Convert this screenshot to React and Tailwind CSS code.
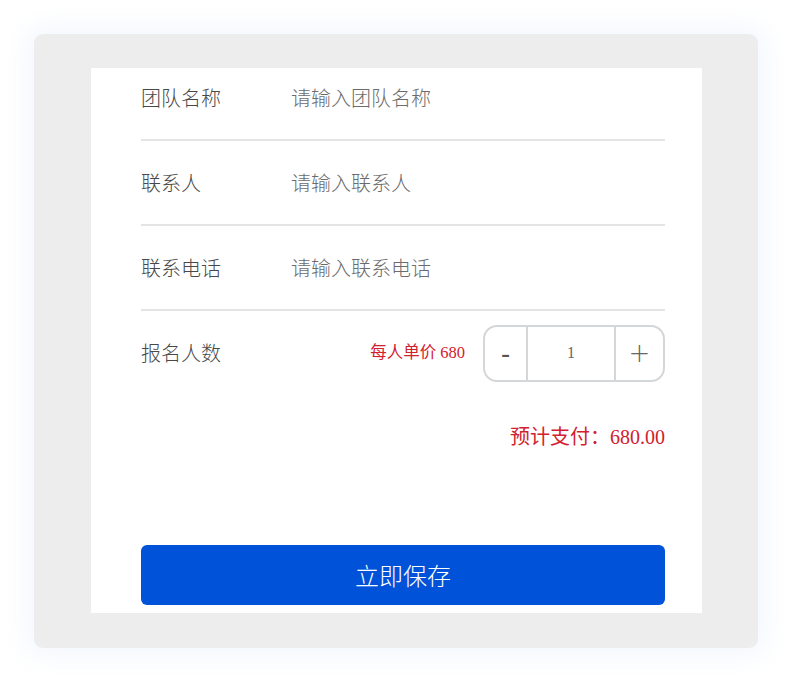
import React from "react";

const cjk = { fontFamily: '"Noto Sans CJK SC", "Noto Sans", sans-serif' };
const mix = { fontFamily: '"Liberation Serif", "Noto Sans CJK SC", serif' };

function Row({ label, placeholder, className }) {
  return (
    <div className={`flex items-center border-b-2 border-[#e4e4e4] ${className}`}>
      <div className="w-[150px] shrink-0 text-[20px] leading-[28px] text-[#484848] font-light" style={cjk}>
        {label}
      </div>
      <input
        className="flex-1 bg-transparent text-[20px] leading-[28px] text-[#333] font-light outline-none placeholder:text-[#6c6c6c]"
        style={cjk}
        placeholder={placeholder}
      />
    </div>
  );
}

export default function App() {
  return (
    <div className="w-[792px] h-[682px] bg-white p-[34px]">
      <div className="w-full h-full rounded-[9px] bg-[#ededed] pt-[34px] pb-[35px] pl-[57px] pr-[56px] shadow-[0_0_24px_8px_rgba(225,236,250,0.4)]">
        <div className="h-full bg-white pl-[50px] pr-[37px] flex flex-col">
          <Row label="团队名称" placeholder="请输入团队名称" className="h-[73px] !items-start pt-[16px]" />
          <Row label="联系人" placeholder="请输入联系人" className="h-[85px]" />
          <Row label="联系电话" placeholder="请输入联系电话" className="h-[85px]" />
          <div className="flex items-center h-[84px]">
            <div className="w-[150px] shrink-0 text-[20px] leading-[28px] text-[#484848] font-light" style={cjk}>
              报名人数
            </div>
            <div className="flex-1 flex items-center justify-end">
              <span className="text-[16.5px] text-[#d3202e] mr-[18px]" style={mix}>
                每人单价 680
              </span>
              <div className="flex h-[57px] w-[182px] rounded-[14px] border-2 border-[#d4d7d9] overflow-hidden">
                <button className="w-[43px] flex items-center justify-center text-[26px] font-bold text-[#555] border-r-2 border-[#d4d7d9]" style={mix}>
                  -
                </button>
                <div className="w-[86px] flex items-center justify-center text-[16px] text-[#666]" style={mix}>
                  1
                </div>
                <button className="flex-1 flex items-center justify-center text-[26px] text-[#666] border-l-2 border-[#d4d7d9] font-light" style={{ fontFamily: '"DejaVu Sans", sans-serif' }}>
                  +
                </button>
              </div>
            </div>
          </div>
          <div className="mt-[28px] text-right text-[20px] leading-[28px] text-[#d3202e]" style={mix}>
            预计支付：680.00
          </div>
          <div className="flex-1" />
          <button
            className="mb-[8px] h-[60px] w-full rounded-[6px] bg-[#0052d9] text-white text-[24px] font-light"
            style={cjk}
          >
            立即保存
          </button>
        </div>
      </div>
    </div>
  );
}
